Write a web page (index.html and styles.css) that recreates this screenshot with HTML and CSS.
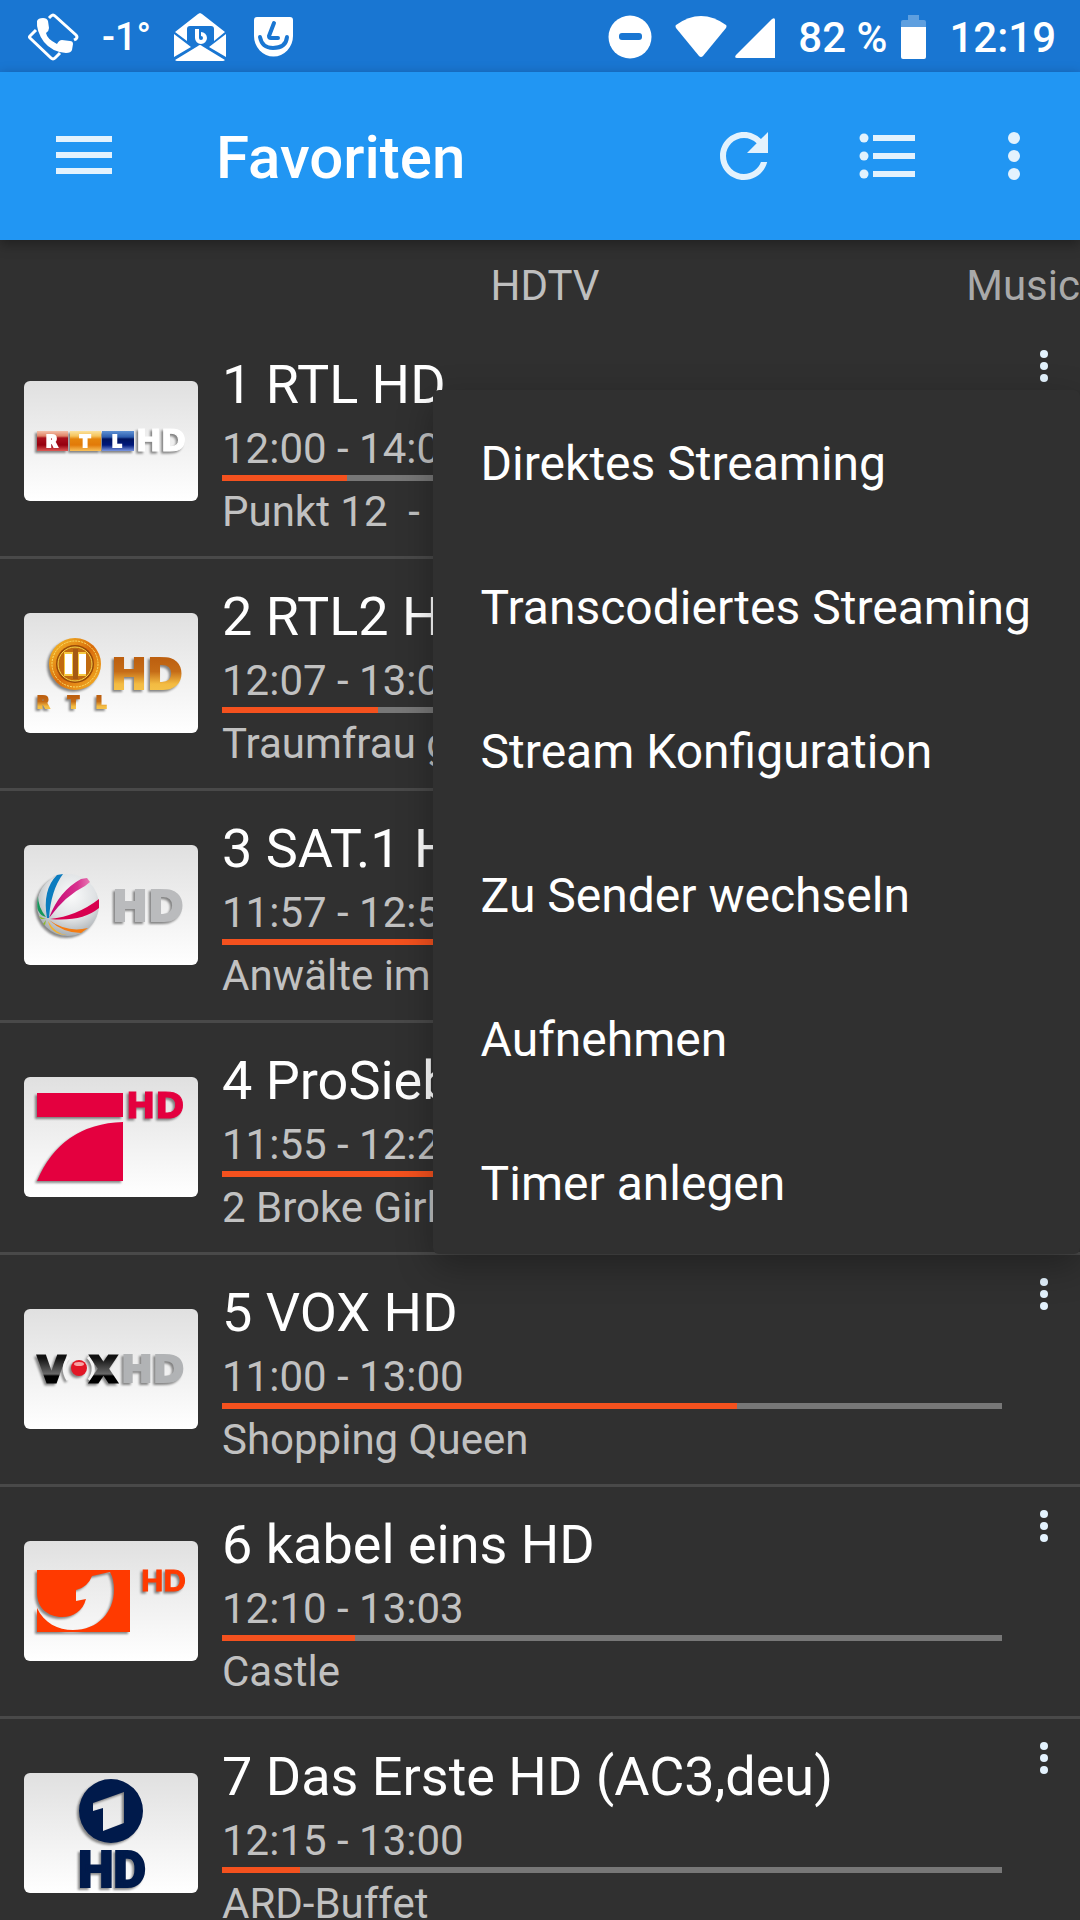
FILE: index.html
```html
<!DOCTYPE html>
<html lang="de">
<head>
    <meta charset="UTF-8">
    <meta name="viewport" content="width=device-width, initial-scale=1.0">
    <title>Favoriten</title>
    <link rel="stylesheet" href="styles.css">
</head>
<body>
    <!-- shared icons and gradients -->
    <svg class="defs" width="0" height="0" aria-hidden="true">
        <defs>
            <symbol id="dots" viewBox="0 0 24 24">
                <circle cx="12" cy="6" r="2"/><circle cx="12" cy="12" r="2"/><circle cx="12" cy="18" r="2"/>
            </symbol>
            <linearGradient id="red" x1="0" y1="0" x2="0" y2="1">
                <stop offset="0" stop-color="#f4c0a8"/><stop offset=".25" stop-color="#e08468"/><stop offset=".35" stop-color="#a8101c"/><stop offset=".7" stop-color="#96000f"/><stop offset="1" stop-color="#dd5a55"/>
            </linearGradient>
            <linearGradient id="yellow" x1="0" y1="0" x2="0" y2="1">
                <stop offset="0" stop-color="#fbe29c"/><stop offset=".25" stop-color="#f5c45c"/><stop offset=".4" stop-color="#e5850c"/><stop offset=".7" stop-color="#e27a08"/><stop offset="1" stop-color="#f7c05a"/>
            </linearGradient>
            <linearGradient id="blue" x1="0" y1="0" x2="0" y2="1">
                <stop offset="0" stop-color="#5f92d4"/><stop offset=".3" stop-color="#2c5cae"/><stop offset=".4" stop-color="#00145f"/><stop offset=".7" stop-color="#00187a"/><stop offset="1" stop-color="#7a96e0"/>
            </linearGradient>
            <linearGradient id="gold" x1="0" y1="0" x2="0" y2="1">
                <stop offset=".2" stop-color="#bd6010"/><stop offset=".45" stop-color="#c56c17"/><stop offset=".7" stop-color="#f3bb42"/><stop offset="1" stop-color="#f7c850"/>
            </linearGradient>
            <linearGradient id="coin" x1="0" y1="0" x2="1" y2="1">
                <stop offset="0" stop-color="#f9c52c"/><stop offset=".5" stop-color="#d96c0c"/><stop offset="1" stop-color="#f8b928"/>
            </linearGradient>
            <radialGradient id="ball" cx=".55" cy=".35" r=".65">
                <stop offset="0" stop-color="#fafbfb"/><stop offset=".6" stop-color="#dfe2e4"/><stop offset="1" stop-color="#a9aeb2"/>
            </radialGradient>
            <linearGradient id="black" x1="0" y1="0" x2="0" y2="1">
                <stop offset=".2" stop-color="#111"/><stop offset=".6" stop-color="#6a6a6a"/><stop offset=".65" stop-color="#000"/>
            </linearGradient>
            <linearGradient id="pink" x1="0" y1="0" x2="1" y2="0">
                <stop offset="0" stop-color="#c4006d"/><stop offset=".7" stop-color="#d8338f"/><stop offset="1" stop-color="#e77ab4"/>
            </linearGradient>
        </defs>
    </svg>

    <div class="statusbar">
        <div class="status-group">
            <svg width="52" height="48" viewBox="0 0 52 48">
                <path d="M22 5 L24 3 Q26 1 28 3 L49 22 Q51 24 49 26 L47 27 M9 17 L3 23 Q2 24 3 25 L24 45 Q26 47 28 45 L33 40" fill="none" stroke="#fff" stroke-width="3"/>
                <path d="M10 8 Q11 5 16 5 Q20 5 21 8 L22 15 Q22 18 19 20 Q20 26 30 31 Q32 27 35 27 L43 28 Q46 28 46 31 L45 37 Q44 40 39 40 Q25 39 17 29 Q9 18 10 8Z" fill="#fff"/>
            </svg>
            <span class="temp">-1°</span>
            <svg width="52" height="48" viewBox="0 0 52 48">
                <path d="M26 0 L28 1 L51 19 L40 28 V16 Q40 13 37 13 H16 Q13 13 13 16 V28 L1 19 L24 1Z" fill="#fff"/>
                <path d="M0 21 L17 34 L0 44Z M52 21 V44 L35 34Z M1 47 L24 33 Q26 31 28 33 L51 47 Q50 48 49 48 H3Q2 48 1 47Z" fill="#fff"/>
                <path d="M23 16 V25 A4 4 0 1 0 27 21" fill="none" stroke="#fff" stroke-width="4"/>
            </svg>
            <svg width="52" height="48" viewBox="0 0 52 48">
                <path d="M8 4 H41 Q44 4 44 7 V23 A19 20 0 0 1 5 23 V7 Q5 4 8 4Z" fill="#fff"/>
                <path d="M25 10 L20 23 Q20 25 22 25 H29 M11 24 Q13 35 24 35 Q37 35 38 24" fill="none" stroke="#1976d2" stroke-width="4" stroke-linecap="round" stroke-linejoin="round"/>
            </svg>
        </div>
        <div class="status-group">
            <svg width="44" height="44" viewBox="0 0 44 44">
                <circle cx="22" cy="22" r="21.500" fill="#fff"/>
                <rect x="11" y="18" width="23" height="7" rx="3" fill="#1976d2"/>
            </svg>
            <span class="signal">
                <svg width="52" height="44" viewBox="0 0 52 44"><path d="M1 10 Q26 -8 51 10 Q52 11 51 13 L28 41 Q26 43 24 41 L1 13 Q0 11 1 10Z" fill="#fff"/></svg>
                <svg width="40" height="44" viewBox="0 0 40 44"><path d="M37 4 Q40 2 40 5 V43 H2 Q-1 43 1 40Z" fill="#fff"/></svg>
            </span>
            <span class="battery">
                <span>82 %</span>
                <svg width="25" height="44" viewBox="0 0 25 44">
                    <path d="M7 0 H18 V5 H23 Q25 5 25 7 V12 H0 V7 Q0 5 2 5 H7Z" fill="#5e9fdf"/>
                    <path d="M0 12 H25 V42 Q25 44 23 44 H2 Q0 44 0 42Z" fill="#fff"/>
                </svg>
            </span>
            <span>12:19</span>
        </div>
    </div>

    <header class="toolbar">
        <button type="button" class="nav-button" aria-label="Menü">
            <svg width="72" height="72" viewBox="0 0 72 72"><path d="M8 16h56v6H8zM8 32h56v6H8zM8 48h56v6H8z"/></svg>
        </button>
        <h1>Favoriten</h1>
        <button type="button" class="action" aria-label="Aktualisieren">
            <svg width="72" height="72" viewBox="0 0 24 24"><path d="M17.650 6.350C16.200 4.900 14.210 4 12 4c-4.420 0-7.990 3.580-7.990 8s3.570 8 7.990 8c3.730 0 6.840-2.550 7.730-6h-2.080c-.82 2.330-3.040 4-5.650 4-3.310 0-6-2.690-6-6s2.690-6 6-6c1.660 0 3.140.69 4.220 1.780L13 11h7V4l-2.350 2.350z"/></svg>
        </button>
        <button type="button" class="action" aria-label="Liste">
            <svg width="72" height="72" viewBox="0 0 24 24"><circle cx="4" cy="6" r="1.500"/><circle cx="4" cy="12" r="1.500"/><circle cx="4" cy="18" r="1.500"/><path d="M7 5h14v2H7zM7 11h14v2H7zM7 17h14v2H7z"/></svg>
        </button>
        <button type="button" class="action more" aria-label="Weitere Optionen">
            <svg width="72" height="72"><use href="#dots"/></svg>
        </button>
    </header>

    <nav class="tabs">
        <a href="#hdtv" class="active">HDTV</a>
        <a href="#music">Music</a>
    </nav>

    <ul class="channels">
        <li class="channel">
            <svg class="logo" viewBox="0 0 174 120" role="img" aria-label="RTL HD">
                <g class="shadow wide">
                    <rect x="13" y="50" width="31" height="20" fill="url(#red)"/>
                    <rect x="46" y="50" width="31" height="20" fill="url(#yellow)"/>
                    <rect x="78" y="50" width="32" height="20" fill="url(#blue)"/>
                    <g fill="#fff" stroke="#fff" font-size="15">
                        <text x="22" y="66" stroke-width="2">R</text><text x="56" y="66" stroke-width="2">T</text><text x="88" y="66" stroke-width="2">L</text>
                        <text x="112" y="70" font-size="30">HD</text>
                    </g>
                </g>
            </svg>
            <div class="info">
                <h2>1 RTL HD</h2>
                <p>12:00 - 14:00</p>
                <div class="bar"><div class="fill" style="width: 16%"></div></div>
                <p>Punkt 12  -  Das RTL-Mittagsjournal</p>
            </div>
            <button type="button" class="row-more" aria-label="Optionen für RTL HD"><svg width="48" height="48"><use href="#dots"/></svg></button>
            <div class="menu" role="menu">
                <button type="button" role="menuitem">Direktes Streaming</button>
                <button type="button" role="menuitem">Transcodiertes Streaming</button>
                <button type="button" role="menuitem">Stream Konfiguration</button>
                <button type="button" role="menuitem">Zu Sender wechseln</button>
                <button type="button" role="menuitem">Aufnehmen</button>
                <button type="button" role="menuitem">Timer anlegen</button>
            </div>
        </li>
        <li class="channel">
            <svg class="logo" viewBox="0 0 174 120" role="img" aria-label="RTL2 HD">
                <g class="shadow wide" fill="url(#gold)">
                    <circle cx="51" cy="51" r="26" fill="url(#coin)"/>
                    <circle cx="51" cy="51" r="23" fill="none" stroke="#fbe06a" stroke-width="1" stroke-dasharray="2 1"/>
                    <circle cx="51" cy="51" r="19" fill="#9a4a08"/>
                    <circle cx="51" cy="51" r="17" fill="#c06a10" stroke="#f9d84a" stroke-width="1"/>
                    <path d="M40 39h22v24H40z" fill="#f6c840"/>
                    <path d="M49 36h5v30h-5z" fill="#a45a14"/>
                    <path d="M41 41h7v20h-7zM55 41h7v20h-7z" fill="#fff"/>
                    <text x="87" y="76" font-size="43" stroke="url(#gold)" stroke-width="2">HD</text>
                    <g font-size="16" stroke="url(#gold)" stroke-width="2"><text x="13" y="95">R</text><text x="44" y="95">T</text><text x="72" y="95">L</text></g>
                </g>
            </svg>
            <div class="info">
                <h2>2 RTL2 HD</h2>
                <p>12:07 - 13:07</p>
                <div class="bar"><div class="fill" style="width: 20%"></div></div>
                <p>Traumfrau gesucht</p>
            </div>
            <button type="button" class="row-more" aria-label="Optionen für RTL2 HD"><svg width="48" height="48"><use href="#dots"/></svg></button>
        </li>
        <li class="channel">
            <svg class="logo" viewBox="0 0 174 120" role="img" aria-label="SAT.1 HD">
                <g class="shadow wide">
                    <circle cx="44" cy="60" r="31" fill="url(#ball)"/>
                    <path d="M25 73 Q35 46 57 34 L63 33 L66 37 L61 41 Q42 50 25 73Z" fill="url(#pink)"/>
                    <path d="M23 73 Q18 45 33 30 L39 29 Q27 45 25 73Z" fill="#0c7cbf"/>
                    <path d="M26 74 Q53 71 75 54 L75 63 Q58 77 26 74Z" fill="#d8004f"/>
                    <path d="M25 75 Q43 88 64 83 L57 88 Q39 88 25 75Z" fill="#f47b11"/>
                    <path d="M24 76 Q31 89 43 90 Q35 90 30 86Q25 82 24 76Z" fill="#f7b324"/>
                    <path d="M22 72 Q14 62 14 51 Q12 64 15 67 Q17 71 22 72Z" fill="#15975b"/>
                    <path d="M22 74 Q18 73 15 71 L17 74Z M22 75 L19 79 L21 80Z" fill="#8dbb2a"/>
                    <text x="88" y="76" font-size="43" fill="#babbbd" stroke="#babbbd" stroke-width="2">HD</text>
                </g>
            </svg>
            <div class="info">
                <h2>3 SAT.1 HD</h2>
                <p>11:57 - 12:57</p>
                <div class="bar"><div class="fill" style="width: 37%"></div></div>
                <p>Anwälte im Einsatz</p>
            </div>
            <button type="button" class="row-more" aria-label="Optionen für SAT.1 HD"><svg width="48" height="48"><use href="#dots"/></svg></button>
        </li>
        <li class="channel">
            <svg class="logo" viewBox="0 0 174 120" role="img" aria-label="ProSieben HD">
                <g class="shadow wide" fill="#e4003f">
                    <path d="M13 16h86v24H13zM99 45V104H13Q37 47 99 45Z"/>
                    <text x="102" y="41" font-size="35" stroke="#e4003f">HD</text>
                </g>
            </svg>
            <div class="info">
                <h2>4 ProSieben HD</h2>
                <p>11:55 - 12:25</p>
                <div class="bar"><div class="fill" style="width: 80%"></div></div>
                <p>2 Broke Girls</p>
            </div>
            <button type="button" class="row-more" aria-label="Optionen für ProSieben HD"><svg width="48" height="48"><use href="#dots"/></svg></button>
        </li>
        <li class="channel">
            <svg class="logo" viewBox="0 0 174 120" role="img" aria-label="VOX HD">
                <g class="shadow wide" font-size="35">
                    <text x="14" y="73" fill="url(#black)" stroke="url(#black)" stroke-width="3">V</text>
                    <path d="M45 48 Q36 59 44 71M64 48Q74 59 65 71" fill="none" stroke="#f4f4f4" stroke-width="3"/>
                    <text x="66" y="73" fill="url(#black)" stroke="url(#black)" stroke-width="3">X</text>
                    <circle cx="55" cy="59" r="8" fill="#e21726"/>
                    <ellipse cx="55" cy="55" rx="5" ry="2" fill="#f7a5a5"/>
                    <text x="97" y="73" font-size="38" fill="#b1b3b5" stroke="#b1b3b5" stroke-width="2">HD</text>
                </g>
            </svg>
            <div class="info">
                <h2>5 VOX HD</h2>
                <p>11:00 - 13:00</p>
                <div class="bar"><div class="fill" style="width: 66%"></div></div>
                <p>Shopping Queen</p>
            </div>
            <button type="button" class="row-more" aria-label="Optionen für VOX HD"><svg width="48" height="48"><use href="#dots"/></svg></button>
        </li>
        <li class="channel">
            <svg class="logo" viewBox="0 0 174 120" role="img" aria-label="kabel eins HD">
                <g class="shadow" fill="#ff3a00">
                    <path fill-rule="evenodd" d="M13 29H106V91H13V67C20 82 34 89 49 89C74 89 90 71 90 49Q90 38 86 31L68 35Q64 46 52 49V60L62 58C59 70 49 76 38 76C24 76 13 67 13 52Z"/>
                    <text x="117" y="50" font-size="29" class="round" stroke="#ff3a00">HD</text>
                </g>
            </svg>
            <div class="info">
                <h2>6 kabel eins HD</h2>
                <p>12:10 - 13:03</p>
                <div class="bar"><div class="fill" style="width: 17%"></div></div>
                <p>Castle</p>
            </div>
            <button type="button" class="row-more" aria-label="Optionen für kabel eins HD"><svg width="48" height="48"><use href="#dots"/></svg></button>
        </li>
        <li class="channel">
            <svg class="logo" viewBox="0 0 174 120" role="img" aria-label="Das Erste HD">
                <g class="shadow" fill="#001a4b">
                    <path fill-rule="evenodd" d="M87 6A32 32 0 1 1 87 70A32 32 0 1 1 87 6ZM69 30V38L79 35V58L100 50V19Z"/>
                    <text x="88" y="114" font-size="50" stroke="#001a4b" stroke-width="2" text-anchor="middle">HD</text>
                </g>
            </svg>
            <div class="info">
                <h2>7 Das Erste HD (AC3,deu)</h2>
                <p>12:15 - 13:00</p>
                <div class="bar"><div class="fill" style="width: 10%"></div></div>
                <p>ARD-Buffet</p>
            </div>
            <button type="button" class="row-more" aria-label="Optionen für Das Erste HD"><svg width="48" height="48"><use href="#dots"/></svg></button>
        </li>
    </ul>
</body>
</html>
```
FILE: styles.css
```css
* {
    box-sizing: border-box;
}

body {
    margin: 0;
    height: 100vh;
    display: flex;
    flex-direction: column;
    overflow: hidden;
    background-color: #303030;
    color: #fff;
    font-family: Roboto, "Noto Sans", sans-serif;
}

h1, h2, p, ul {
    margin: 0;
    padding: 0;
    font-weight: 400;
}

button {
    border: none;
    padding: 0;
    background: none;
    color: inherit;
    font: inherit;
    cursor: pointer;
}

svg {
    display: block;
    flex-shrink: 0;
}

.defs {
    position: absolute;
}

/* status bar */
.statusbar {
    display: flex;
    justify-content: space-between;
    align-items: center;
    height: 72px;
    flex-shrink: 0;
    padding: 2px 24px 0 27px;
    background-color: #1976d2;
    font-size: 42px;
    font-weight: 500;
}

.status-group {
    display: flex;
    align-items: center;
    gap: 23px;
}

.temp {
    font-size: 38px;
}

.signal {
    display: flex;
    gap: 8px;
}

.battery {
    display: flex;
    align-items: center;
    gap: 14px;
}

/* toolbar */
.toolbar {
    position: relative;
    z-index: 1;
    display: flex;
    align-items: center;
    height: 168px;
    flex-shrink: 0;
    padding-right: 12px;
    background-color: #2196f3;
    box-shadow: 0 4px 12px rgba(0, 0, 0, 0.35);
}

.toolbar svg,
.row-more svg {
    fill: #e3f2fd;
}

.nav-button {
    display: flex;
    justify-content: center;
    width: 168px;
}

.toolbar h1 {
    flex: 1;
    padding: 2px 0 0 48px;
    font-size: 60px;
    font-weight: 500;
}

.action {
    padding: 0 36px;
}

.action.more {
    padding: 0 18px;
}

/* tabs */
.tabs {
    display: grid;
    grid-template-columns: 1fr auto 1fr;
    height: 87px;
    flex-shrink: 0;
    padding-top: 21px;
    font-size: 42px;
    line-height: 50px;
}

.tabs a {
    grid-column: 3;
    justify-self: end;
    color: #a9a9a9;
    text-decoration: none;
}

.tabs .active {
    grid-column: 2;
    padding-left: 10px;
    color: #bebebe;
}

/* channel list */
.channels {
    flex: 1;
    min-height: 0;
    overflow-y: auto;
    scrollbar-width: none;
    list-style: none;
}

.channel {
    position: relative;
    display: flex;
    align-items: flex-start;
    height: 232px;
    padding-left: 24px;
    border-bottom: 3px solid #494949;
}

.logo {
    width: 174px;
    height: 120px;
    margin-top: 54px;
    border-radius: 6px;
    background: linear-gradient(#e0e0e0, #fff);
}

.logo text {
    font-family: Roboto, sans-serif;
    font-weight: 900;
}

.logo .wide text {
    font-family: "DejaVu Sans", sans-serif;
}

.logo .round {
    font-family: Lato, sans-serif;
}

.shadow {
    filter: drop-shadow(-2px 2px 1px rgba(0, 0, 0, 0.45));
}

.info {
    flex: 1;
    min-width: 0;
    padding-top: 23px;
    margin-left: 24px;
}

.info h2 {
    margin-bottom: 4px;
    font-size: 54px;
    line-height: 70px;
    white-space: nowrap;
}

.info p {
    overflow: hidden;
    color: #c1c1c1;
    font-size: 42px;
    line-height: 50px;
    white-space: pre;
    text-overflow: ellipsis;
}

.bar {
    height: 6px;
    margin: 1px 0 6px;
    background-color: #777;
}

.fill {
    height: 100%;
    background-color: #f4511e;
}

.row-more {
    display: flex;
    justify-content: center;
    align-items: center;
    width: 72px;
    height: 72px;
    margin: 3px 0 0 6px;
}

/* popup menu */
.menu {
    position: absolute;
    z-index: 2;
    top: 63px;
    right: 0;
    display: flex;
    flex-direction: column;
    background-color: #303030;
    border-radius: 6px;
    box-shadow: 0 12px 36px rgba(0, 0, 0, 0.3);
}

.menu button {
    height: 144px;
    padding: 2px 49px 0 48px;
    font-size: 48px;
    text-align: left;
    white-space: nowrap;
}
```
